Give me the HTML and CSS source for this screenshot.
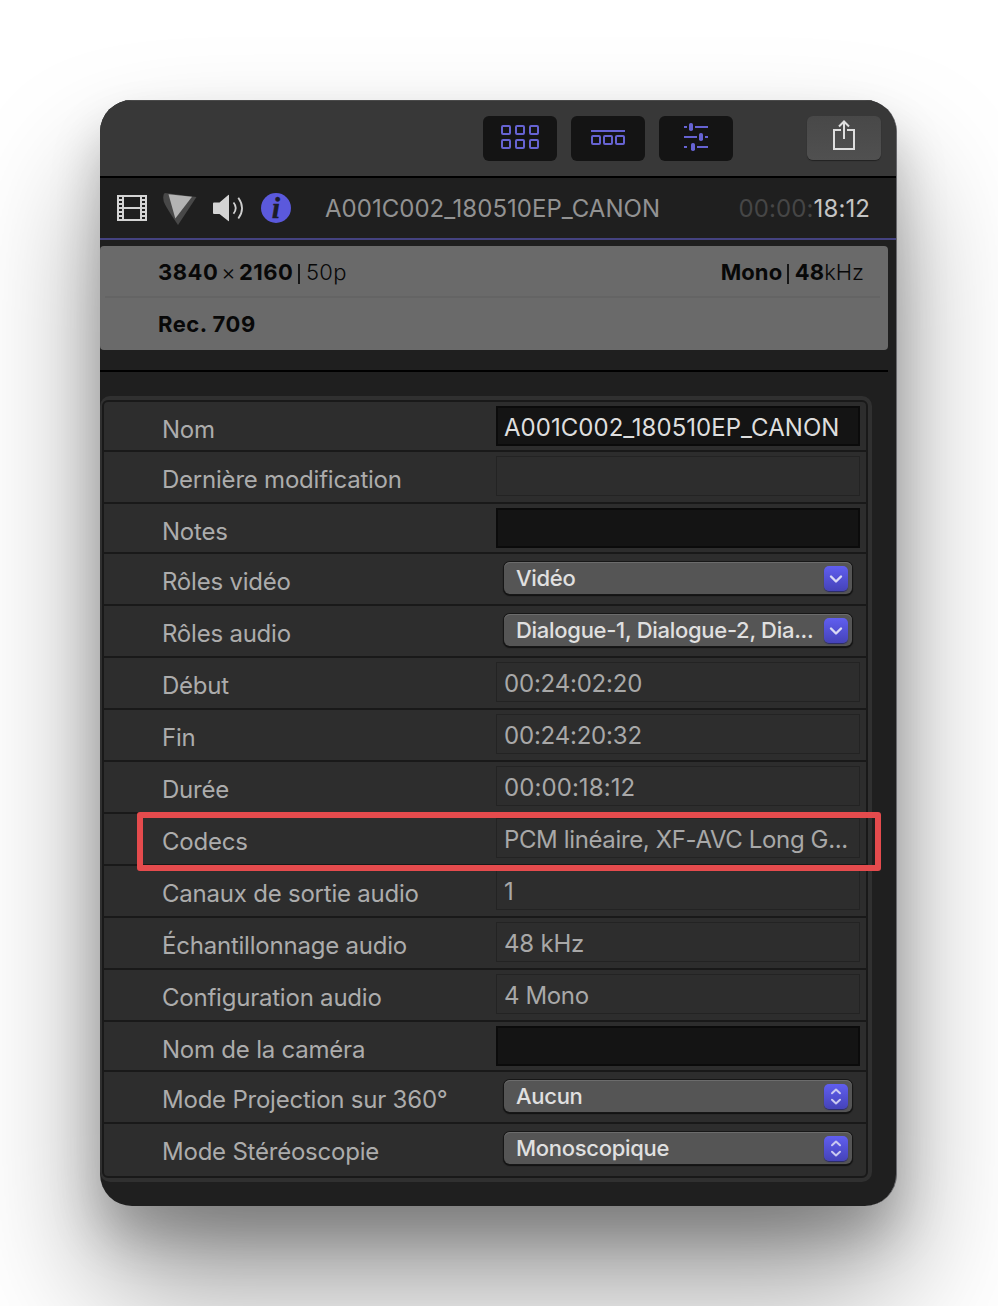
FILE: index.html
```html
<!DOCTYPE html>
<html lang="fr">
<head>
<meta charset="utf-8">
<title>Inspecteur</title>
<link rel="stylesheet" href="styles.css">
</head>
<body>
<div class="window">
  <header class="toolbar">
    <div class="tool"><svg width="74" height="45" viewBox="0 0 74 45" fill="none" stroke="#6663d2" stroke-width="2"><rect x="19" y="10" width="8" height="8" rx="1"/><rect x="33" y="10" width="8" height="8" rx="1"/><rect x="47" y="10" width="8" height="8" rx="1"/><rect x="19" y="24" width="8" height="8" rx="1"/><rect x="33" y="24" width="8" height="8" rx="1"/><rect x="47" y="24" width="8" height="8" rx="1"/></svg></div>
    <div class="tool"><svg width="74" height="45" viewBox="0 0 74 45" fill="none" stroke="#6663d2" stroke-width="2"><path d="M20 15h34"/><rect x="21" y="20" width="8" height="8" rx="1"/><rect x="33" y="20" width="8" height="8" rx="1"/><rect x="45" y="20" width="8" height="8" rx="1"/></svg></div>
    <div class="tool"><svg width="74" height="45" viewBox="0 0 74 45" fill="none" stroke="#6663d2" stroke-width="2"><path d="M25 11h3M36 11h13M25 21h13M46 21h3M25 31h3M38 31h11"/><g fill="#6663d2" stroke="none"><rect x="30" y="7" width="4" height="8" rx="1.8"/><rect x="40" y="17" width="4" height="8" rx="1.8"/><rect x="32" y="27" width="4" height="8" rx="1.8"/></g></svg></div>
    <div class="tool share"><svg width="74" height="44" viewBox="0 0 74 44" fill="none" stroke="#dedede" stroke-width="2"><path d="M34 14h-7v19h20v-19h-7M37 23V6M32 10.5l5-5 5 5"/></svg></div>
  </header>
  <div class="clipbar">
    <svg class="film" width="30" height="26" viewBox="0 0 30 26"><path fill="#d4d4d4" fill-rule="evenodd" d="M0 0h30v26H0zM2 2v2h3V2zM2 6v2h3V6zM2 10v2h3v-2zM2 14v2h3v-2zM2 18v2h3v-2zM2 22v2h3v-2zM25 2v2h3V2zM25 6v2h3V6zM25 10v2h3v-2zM25 14v2h3v-2zM25 18v2h3v-2zM25 22v2h3v-2zM7 2v10h16V2zM7 14v10h16V14z"/></svg>
    <svg class="color" width="34" height="32" viewBox="0 0 34 32"><path fill="#484848" d="M2 0Q-.5 1 .6 8Q2 13 15 32L33.500 4Z"/><path fill="#b3b3b3" d="M5.500 1.200 29 3.800 12.300 25.500Z"/></svg>
    <svg class="sound" width="31" height="28" viewBox="0 0 31 28"><path fill="#d4d4d4" d="M0 9.500Q0 8.500 1 8.500h5.500L15.300 1q.7-.5.7.4v25.200q0 .9-.7.4L6.500 20H1q-1 0-1-1z"/><path fill="none" stroke="#cfcfcf" stroke-width="1.800" d="M20.500 8.500q4.500 5.500 0 11.200M25.300 3.700q7.500 10.500 0 20.800"/></svg>
    <div class="info-badge">i</div>
    <div class="clipname">A001C002_180510EP_CANON</div>
    <div class="timecode"><span>00:00:</span>18:12</div>
  </div>
  <section class="summary">
    <div class="sumrow"><div class="format"><b>3840</b><i class="times">×</i><b>2160</b><i class="bar"></i>50p</div><div class="audio"><b>Mono</b><i class="bar"></i><b>48</b>kHz</div></div>
    <div class="sumrow second"><b class="rec">Rec. 709</b></div>
  </section>
  <hr class="divider">
  <main class="panel">
    <div class="rows">
      <div class="row short"><label>Nom</label><div class="field dark name">A001C002_180510EP_CANON</div></div>
      <div class="row"><label>Dernière modification</label><div class="field"></div></div>
      <div class="row short"><label>Notes</label><div class="field dark"></div></div>
      <div class="row"><label>Rôles vidéo</label><div class="select"><span>Vidéo</span><svg width="24" height="25" viewBox="0 0 24 25"><path d="M7 10.500l5 5 5-5"/></svg></div></div>
      <div class="row"><label>Rôles audio</label><div class="select"><span>Dialogue-1, Dialogue-2, Dia...</span><svg width="24" height="25" viewBox="0 0 24 25"><path d="M7 10.500l5 5 5-5"/></svg></div></div>
      <div class="row"><label>Début</label><div class="field">00:24:02:20</div></div>
      <div class="row"><label>Fin</label><div class="field">00:24:20:32</div></div>
      <div class="row"><label>Durée</label><div class="field duration">00:00:18:12</div></div>
      <div class="row codec"><label>Codecs</label><div class="field codecs">PCM linéaire, XF-AVC Long G...</div></div>
      <div class="row"><label>Canaux de sortie audio</label><div class="field">1</div></div>
      <div class="row"><label>Échantillonnage audio</label><div class="field">48 kHz</div></div>
      <div class="row"><label>Configuration audio</label><div class="field codecs">4 Mono</div></div>
      <div class="row short"><label>Nom de la caméra</label><div class="field dark"></div></div>
      <div class="row"><label>Mode Projection sur 360°</label><div class="select"><span>Aucun</span><svg class="updown" width="24" height="25" viewBox="0 0 24 25"><path d="M8 9.200l4-3.700 4 3.700M8 15.800l4 3.700 4-3.700"/></svg></div></div>
      <div class="row"><label>Mode Stéréoscopie</label><div class="select"><span>Monoscopique</span><svg class="updown" width="24" height="25" viewBox="0 0 24 25"><path d="M8 9.200l4-3.700 4 3.700M8 15.800l4 3.700 4-3.700"/></svg></div></div>
    </div>
  </main>
</div>
</body>
</html>
```
FILE: styles.css
```css
*, *::after { box-sizing: border-box; }
html, body { margin: 0; height: 1306px; overflow: hidden; background: #fff; }
body { padding: 100px; font-family: Inter, sans-serif; font-size: 24px; }
.window {
  width: 797px; height: 1106px; border-radius: 32px; overflow: hidden;
  background: #1f1f1f; border-right: 1px solid #68686c;
  box-shadow: 0 80px 130px rgba(0, 0, 0, .4), 0 30px 50px rgba(0, 0, 0, .22);
}
.toolbar {
  display: flex; gap: 14px; height: 78px; padding: 16px 15px 0 383px;
  background: #383838; border-bottom: 2px solid #000; box-shadow: inset 0 1px #4a4a4a;
}
.tool { width: 74px; height: 45px; border-radius: 6px; background: #141414; }
.tool svg { display: block; }
.share { margin-left: auto; height: 44px; background: linear-gradient(#484848, #505050); box-shadow: 0 1px 1px #222; }
.clipbar {
  display: flex; align-items: center; height: 62px; padding: 0 26px 0 17px;
  border-bottom: 2px solid #444280;
}
.color { margin: 2px 0 0 16px; }
.sound { margin-left: 16px; }
.info-badge {
  width: 30px; height: 30px; margin-left: 17px; border-radius: 50%; background: #5b59dc;
  color: #1c1c28; font: italic bold 30px/30px "Liberation Serif", serif; text-align: center;
  -webkit-text-stroke: .4px #1c1c28;
}
.clipname { margin-left: 34px; padding-top: 1px; color: #929292; letter-spacing: .02px; }
.timecode { margin-left: auto; padding-top: 1px; color: #c4c4c4; letter-spacing: .1px; }
.timecode span { color: #464646; }
.summary {
  width: 788px; height: 104px; margin-top: 6px; padding: 0 8px 0 5px;
  border-radius: 4px; background: #6a6a6a; color: #080808; font-size: 22px;
}
.sumrow { display: flex; justify-content: space-between; align-items: center; height: 52px; padding: 0 16px 1px 53px; }
.sumrow:first-child { border-bottom: 2px solid #646464; padding-top: 2px; }
.sumrow i { font-style: normal; font-weight: 300; }
.sumrow div { font-weight: 300; }
.sumrow b { font-weight: 700; letter-spacing: .3px; }
.sumrow .format { letter-spacing: .3px; }
.sumrow .format b { letter-spacing: .5px; }
.sumrow .audio b { letter-spacing: .1px; }
.sumrow .rec { letter-spacing: .5px; }
.times { margin: 0 3px; }
.bar { display: inline-block; width: 1.5px; height: 20px; margin: 0 6px 0 5px; background: #161616; vertical-align: -4px; }
.divider { width: 788px; height: 2px; margin: 20px 0 24px; border: 0; background: #000; }
.panel { width: 772px; height: 786px; padding: 4px 4px 4px 2px; border-radius: 10px; background: #303030; }
.rows { height: 778px; border: 2px solid #191919; border-radius: 6px; background: #2d2d2d; }
.row { display: flex; position: relative; height: 52px; padding-left: 58px; border-bottom: 2px solid #191919; }
.row.short { height: 50px; }
.row:last-child { border-bottom: 0; }
label { width: 334px; padding-top: 13px; line-height: 29px; color: #acacac; white-space: nowrap; letter-spacing: -.22px; }
.field {
  width: 364px; height: 40px; margin-top: 4px; padding-left: 7px; border: 1px solid #232323;
  color: #a8a8a8; line-height: 41px; white-space: nowrap; background: #2d2d2d; letter-spacing: -.2px;
}
.codecs { letter-spacing: -.37px; }
.duration { letter-spacing: .08px; }
.dark { background: #141414; border: 2px solid #0b0b0b; padding-left: 6px; color: #dedede; line-height: 39px; }
.name { letter-spacing: .04px; }
.select {
  display: flex; justify-content: space-between; width: 348px; height: 32px; margin: 8px 0 0 8px;
  padding: 4px 4px 0 12px; border-radius: 6px; background: #555; color: #e0e0e0;
  font-size: 22px; font-weight: 500; line-height: 25px; white-space: nowrap; letter-spacing: -.29px;
  box-shadow: 0 0 0 1px #171717, 0 1px 1px 1px #111, inset 0 1px #6c6c6c;
}
.select svg {
  width: 24px; height: 25px; border-radius: 5px; background: linear-gradient(#605ef0, #4543b8);
  fill: none; stroke: #d9d9f4; stroke-width: 2.4; stroke-linecap: round; stroke-linejoin: round;
  box-shadow: 0 1px 1px #29296c;
}
.select .updown { stroke: #c9c8f0; stroke-width: 2; }
.codec::after {
  content: ""; position: absolute; z-index: 2; left: 33px; top: -2px; width: 744px; height: 59px;
  border: 6px solid #e54b4d; border-radius: 3px;
}
```
